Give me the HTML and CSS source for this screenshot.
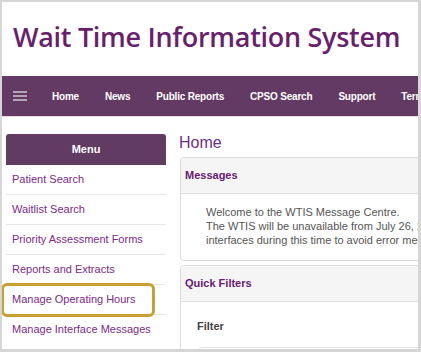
FILE: index.html
```html
<html>
<head>
<title>Wait Time Information System</title>
<meta charset="utf-8">
<link rel="stylesheet" href="styles.css">
</head>
<body>

<div class="frame">

  <header class="brand">
    <h1>Wait Time Information System</h1>
  </header>

  <nav class="topnav">
    <span class="burger">
      <svg width="14" height="10" viewBox="0 0 14 10">
        <rect x="0" y="0" width="14" height="2" fill="#b3a4b4"/>
        <rect x="0" y="4" width="14" height="2" fill="#b3a4b4"/>
        <rect x="0" y="8" width="14" height="2" fill="#b3a4b4"/>
      </svg>
    </span>
    <a href="#">Home</a>
    <a href="#">News</a>
    <a href="#">Public Reports</a>
    <a href="#">CPSO Search</a>
    <a href="#">Support</a>
    <a href="#">Terms of Use</a>
  </nav>

  <div class="layout">

    <aside class="sidenav">
      <div class="sidenav-head">Menu</div>
      <ul>
        <li><a href="#">Patient Search</a></li>
        <li><a href="#">Waitlist Search</a></li>
        <li><a href="#">Priority Assessment Forms</a></li>
        <li><a href="#">Reports and Extracts</a></li>
        <li class="picked"><a href="#">Manage Operating Hours</a></li>
        <li><a href="#">Manage Interface Messages</a></li>
      </ul>
    </aside>

    <main class="content">
      <h2>Home</h2>

      <section class="panel">
        <div class="panel-head">Messages</div>
        <div class="panel-body messages">
          <p>Welcome to the WTIS Message Centre.</p>
          <p>The WTIS will be unavailable from July 26, 2019 for scheduled maintenance. Please stop all<br>
          interfaces during this time to avoid error messages.</p>
        </div>
      </section>

      <section class="panel">
        <div class="panel-head">Quick Filters</div>
        <div class="panel-body filters">
          <div class="filter-label">Filter</div>
          <div class="filter-box"></div>
        </div>
      </section>
    </main>

  </div>
</div>

</body>
</html>
```

FILE: styles.css
```css
body {
  margin: 0;
  font-family: "Liberation Sans", Arial, sans-serif;
  font-size: 11px;
  background: #fff;
}

.frame {
  width: 421px;
  height: 352px;
  box-sizing: border-box;
  border-style: solid;
  border-color: #d6d6d6;
  border-width: 2px 3px 3px 2px;
  overflow: hidden;
  background: #fff;
}

/* Header */

.brand {
  height: 74px;
  box-sizing: border-box;
  padding: 21px 0 0 11px;
}

.brand h1 {
  margin: 0;
  font-family: "Open Sans", sans-serif;
  font-weight: 600;
  font-size: 27px;
  line-height: 28px;
  letter-spacing: -0.3px;
  color: #6a1f6c;
  white-space: nowrap;
}

.topnav {
  height: 40px;
  display: flex;
  align-items: center;
  gap: 26px;
  padding-left: 11px;
  background: #633a63;
  border-bottom: 1px solid #e6dbe6;
  white-space: nowrap;
  overflow: hidden;
}

.burger {
  display: flex;
  margin-right: -1px;
}

.topnav a {
  color: #fff;
  text-decoration: none;
  font-weight: 700;
  font-size: 10px;
  letter-spacing: -0.2px;
}

/* Body */

.layout {
  display: flex;
  gap: 14px;
  padding: 17px 0 0 4px;
}

.sidenav {
  width: 160px;
  flex: none;
}

.sidenav-head {
  height: 31px;
  line-height: 30px;
  text-align: center;
  color: #fff;
  font-weight: 700;
  background: #623b63;
  border-radius: 3px 3px 0 0;
}

.sidenav ul {
  list-style: none;
  margin: 0;
  padding: 0;
}

.sidenav li {
  position: relative;
  height: 29px;
  line-height: 29px;
  padding-left: 6px;
  border-bottom: 1px solid #e6e6e6;
}

.sidenav li:last-child {
  border-bottom: none;
}

.sidenav a {
  color: #7a2b86;
  text-decoration: none;
  white-space: nowrap;
}

.sidenav li.picked::after {
  content: "";
  position: absolute;
  left: -5px;
  top: -2px;
  width: 154px;
  height: 34px;
  box-sizing: border-box;
  border: 3px solid #c9a02f;
  border-radius: 6px;
}

.content {
  width: 420px;
  flex: none;
}

.content h2 {
  margin: 0 0 0 -1px;
  height: 23px;
  line-height: 18px;
  font-size: 16px;
  font-weight: 400;
  color: #6f2f7f;
}

.panel {
  border: 1px solid #dcdcdc;
  border-radius: 4px;
  margin-bottom: 4px;
  background: #fff;
}

.panel-head {
  height: 35px;
  line-height: 35px;
  padding-left: 4px;
  background: #f5f5f5;
  border-bottom: 1px solid #e0e0e0;
  border-radius: 4px 4px 0 0;
  font-weight: 700;
  color: #65206f;
}

.messages {
  padding: 11px 0 13px 25px;
  color: #555;
  line-height: 14px;
  white-space: nowrap;
}

.messages p {
  margin: 0;
}

.filters {
  padding: 17px 0 0 16px;
}

.filter-label {
  font-weight: 700;
  color: #444;
  line-height: 14px;
  margin-bottom: 14px;
}

.filter-box {
  height: 40px;
  border: 1px solid #e3e3e3;
  border-radius: 4px;
  margin-left: 1px;
}
```
